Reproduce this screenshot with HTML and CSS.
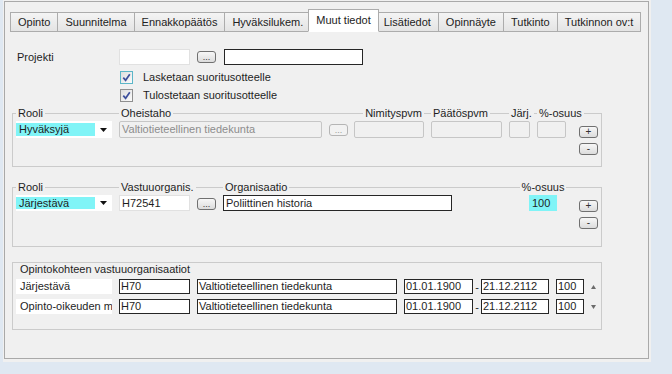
FILE: index.html
```html
<!DOCTYPE html>
<html lang="fi">
<head>
  <meta charset="UTF-8">
  <title>Muut tiedot</title>
  <link rel="stylesheet" href="styles.css">
</head>
<body>
  <div class="window">
    <div class="page">
      <div class="tabs">
        <div class="tab">Opinto</div>
        <div class="tab">Suunnitelma</div>
        <div class="tab">Ennakkopäätös</div>
        <div class="tab">Hyväksilukem.</div>
        <div class="tab tab-active">Muut tiedot</div>
        <div class="tab">Lisätiedot</div>
        <div class="tab">Opinnäyte</div>
        <div class="tab">Tutkinto</div>
        <div class="tab">Tutkinnon ov:t</div>
      </div>

      <div class="form">
        <div class="project-row">
          <span class="label">Projekti</span>
          <span class="textbox project-code"></span>
          <span class="dots-btn">...</span>
          <span class="textbox textbox-dark project-name"></span>
        </div>
        <div class="checks">
          <div class="check-row">
            <span class="check check-focus">
              <svg width="11" height="11" viewBox="0 0 11 11"><path d="M2.3 5.6 L4.6 8.3 L8.8 2.2" fill="none" stroke="#3d4f9c" stroke-width="1.7"/></svg>
            </span>
            Lasketaan suoritusotteelle
          </div>
          <div class="check-row">
            <span class="check">
              <svg width="11" height="11" viewBox="0 0 11 11"><path d="M2.3 5.6 L4.6 8.3 L8.8 2.2" fill="none" stroke="#3d4f9c" stroke-width="1.7"/></svg>
            </span>
            Tulostetaan suoritusotteelle
          </div>
        </div>

        <!-- Oheistaho -->
        <div class="group group-helper">
          <span class="legend">Rooli</span>
          <span class="legend">Oheistaho</span>
          <span></span>
          <span class="legend legend-end">Nimityspvm</span>
          <span class="legend">Päätöspvm</span>
          <span class="legend">Järj.</span>
          <span class="legend">%-osuus</span>
          <span></span>

          <div class="combo">
            <span class="combo-value">Hyväksyjä</span>
            <span class="combo-arrow"><svg width="7" height="4" viewBox="0 0 7 4"><path d="M0 0 H7 L3.5 4 Z" fill="#111"/></svg></span>
          </div>
          <span class="textbox textbox-disabled">Valtiotieteellinen tiedekunta</span>
          <span class="dots-btn dots-btn-disabled">...</span>
          <span class="textbox textbox-disabled"></span>
          <span class="textbox textbox-disabled"></span>
          <span class="textbox textbox-disabled"></span>
          <span class="textbox textbox-disabled"></span>
          <div class="steppers">
            <span class="step-btn">+</span>
            <span class="step-btn">-</span>
          </div>
        </div>

        <!-- Vastuuorganisaatio -->
        <div class="group group-org">
          <span class="legend">Rooli</span>
          <span class="legend">Vastuuorganis.</span>
          <span></span>
          <span class="legend">Organisaatio</span>
          <span></span>
          <span class="legend legend-center">%-osuus</span>
          <span></span>

          <div class="combo">
            <span class="combo-value">Järjestävä</span>
            <span class="combo-arrow"><svg width="7" height="4" viewBox="0 0 7 4"><path d="M0 0 H7 L3.5 4 Z" fill="#111"/></svg></span>
          </div>
          <span class="textbox">H72541</span>
          <span class="dots-btn">...</span>
          <span class="textbox textbox-dark">Poliittinen historia</span>
          <span></span>
          <span class="textbox textbox-cyan">100</span>
          <div class="steppers">
            <span class="step-btn">+</span>
            <span class="step-btn">-</span>
          </div>
        </div>

        <!-- Opintokohteen vastuuorganisaatiot -->
        <div class="group-list">
          <span class="legend legend-list">Opintokohteen vastuuorganisaatiot</span>
          <div class="org-row">
            <span class="cell">Järjestävä</span>
            <span class="textbox textbox-dark org-code">H70</span>
            <span class="textbox textbox-dark org-name">Valtiotieteellinen tiedekunta</span>
            <span class="range">
              <span class="textbox textbox-dark date">01.01.1900</span>
              <span class="dash">-</span>
              <span class="textbox textbox-dark date date-end">21.12.2112</span>
            </span>
            <span class="textbox textbox-dark share">100</span>
            <svg class="scroll-arrow" width="5" height="4" viewBox="0 0 5 4"><path d="M0 4 H5 L2.5 0 Z" fill="#6b6b6b"/></svg>
          </div>
          <div class="org-row">
            <span class="cell">Opinto-oikeuden myöntäjä</span>
            <span class="textbox textbox-dark org-code">H70</span>
            <span class="textbox textbox-dark org-name">Valtiotieteellinen tiedekunta</span>
            <span class="range">
              <span class="textbox textbox-dark date">01.01.1900</span>
              <span class="dash">-</span>
              <span class="textbox textbox-dark date date-end">21.12.2112</span>
            </span>
            <span class="textbox textbox-dark share">100</span>
            <svg class="scroll-arrow" width="5" height="4" viewBox="0 0 5 4"><path d="M0 0 H5 L2.5 4 Z" fill="#6b6b6b"/></svg>
          </div>
        </div>
      </div>
    </div>
  </div>
</body>
</html>
```
FILE: styles.css
```css
* {
  box-sizing: border-box;
}
body {
  margin: 0;
  background: #dfe8f2;
  font-family: "Liberation Sans", Arial, sans-serif;
  font-size: 11px;
  color: #1e1e1e;
}
.window {
  width: 648px;
  height: 362px;
  margin-left: 3px;
  padding: 1px 2px 3px 1px;
  background: #f0f0f0;
}
.page {
  height: 100%;
  border: 1px solid #a9a9a9;
  padding-left: 5px;
}

/* Tabs */
.tabs {
  display: flex;
  align-items: flex-end;
  height: 23px;
  margin-top: 7px;
}
.tab {
  height: 20px;
  line-height: 18px;
  padding: 0 7px;
  margin-left: -1px;
  border: 1px solid #acacac;
  background: linear-gradient(#f4f4f4, #e4e4e4);
  color: #222;
  white-space: nowrap;
}
.tab:first-child {
  margin-left: 0;
}
.tab-active {
  height: 23px;
  line-height: 21px;
  margin: 0 -2px 0 -3px;
  background: #fff;
  border-bottom-color: #fff;
  position: relative;
  z-index: 1;
}

/* Form */
.form {
  padding-top: 16px;
}
.project-row {
  display: flex;
  align-items: center;
  height: 17px;
  padding-left: 7px;
}
.label {
  width: 102px;
}
.project-code {
  width: 71px;
  height: 17px;
  margin-right: 7px;
}
.project-name {
  width: 139px;
  height: 14px;
  margin-left: 8px;
}
.checks {
  margin: 3px 0 0 110px;
}
.check-row {
  display: flex;
  align-items: center;
  height: 18px;
}
.check {
  width: 13px;
  height: 13px;
  margin-right: 10px;
  border: 1px solid #8f8f8f;
  background: linear-gradient(135deg, #dedede, #fbfbfb);
  display: flex;
  align-items: center;
  justify-content: center;
}
.check-focus {
  border-color: #5cb6c8;
}

/* Boxes */
.textbox {
  height: 16px;
  line-height: 14px;
  padding: 0 2px;
  border: 1px solid #e1e1e1;
  background: #fff;
  white-space: nowrap;
  overflow: hidden;
}
.textbox-dark {
  border-color: #262626;
}
.textbox-disabled {
  background: #f0f0f0;
  border-color: #c6c6c6;
  border-radius: 2px;
  color: #8d8d8d;
}
.textbox-cyan {
  background: #80f4f7;
  border-color: #80f4f7;
}
.dots-btn,
.step-btn {
  width: 19px;
  height: 12px;
  border: 1px solid #707070;
  border-radius: 3px;
  background: linear-gradient(#f7f7f7, #dcdcdc);
  color: #333;
  display: flex;
  justify-content: center;
  font-size: 9px;
}
.dots-btn {
  align-items: flex-end;
  line-height: 9px;
}
.dots-btn-disabled {
  border-color: #b5b5b5;
  color: #9a9a9a;
  background: #f2f2f2;
}
.step-btn {
  align-items: center;
  line-height: 10px;
  font-size: 10px;
}
.combo {
  display: flex;
  align-items: center;
  height: 16px;
  background: #fff;
}
.combo-value {
  flex: 1;
  height: 12px;
  line-height: 12px;
  padding-left: 3px;
  background: #80f4f7;
}
.combo-arrow {
  width: 17px;
  display: flex;
  justify-content: center;
}

/* Group boxes */
.group,
.group-list {
  width: 590px;
  margin-left: 2px;
  border: 1px solid #cbcbcb;
  padding: 0 3px;
}
.group {
  display: grid;
  column-gap: 7px;
  row-gap: 1px;
  align-items: start;
}
.group-helper {
  grid-template-columns: 96px 203px 18px 70px 71px 21px 29px 1fr;
  margin-top: 9px;
  padding-bottom: 11px;
}
.group-helper .textbox,
.group-helper .combo {
  height: 17px;
  line-height: 15px;
}
.group-helper .combo-value {
  height: 13px;
  line-height: 13px;
}
.group-org {
  grid-template-columns: 96px 71px 19px 229px 1fr 28px 34px;
  margin-top: 20px;
  padding-bottom: 17px;
}
.group .dots-btn {
  margin-top: 3px;
}
.legend {
  margin-top: -7px;
  height: 13px;
  line-height: 13px;
  padding: 0 2px;
  background: #f0f0f0;
  white-space: nowrap;
  justify-self: start;
}
.legend-end {
  justify-self: end;
}
.legend-center {
  justify-self: center;
}
.steppers {
  display: flex;
  flex-direction: column;
  align-items: flex-end;
  gap: 5px;
  padding-top: 5px;
}

/* Vastuuorganisaatiot list */
.group-list {
  margin-top: 15px;
  padding-bottom: 15px;
}
.legend-list {
  display: inline-block;
  margin-left: 2px;
}
.org-row {
  display: flex;
  align-items: center;
  gap: 7px;
  height: 15px;
  margin-top: 3px;
}
.org-row + .org-row {
  margin-top: 5px;
}
.org-row .textbox {
  height: 15px;
  line-height: 13px;
  padding: 0 1px;
}
.cell {
  width: 96px;
  height: 15px;
  line-height: 15px;
  padding-left: 4px;
  background: #fff;
  white-space: nowrap;
  overflow: hidden;
}
.org-code {
  width: 71px;
}
.org-name {
  width: 200px;
}
.range {
  display: flex;
  align-items: center;
}
.date {
  width: 69px;
}
.date-end {
  width: 68px;
}
.dash {
  width: 8px;
  text-align: center;
}
.share {
  width: 28px;
}
```
